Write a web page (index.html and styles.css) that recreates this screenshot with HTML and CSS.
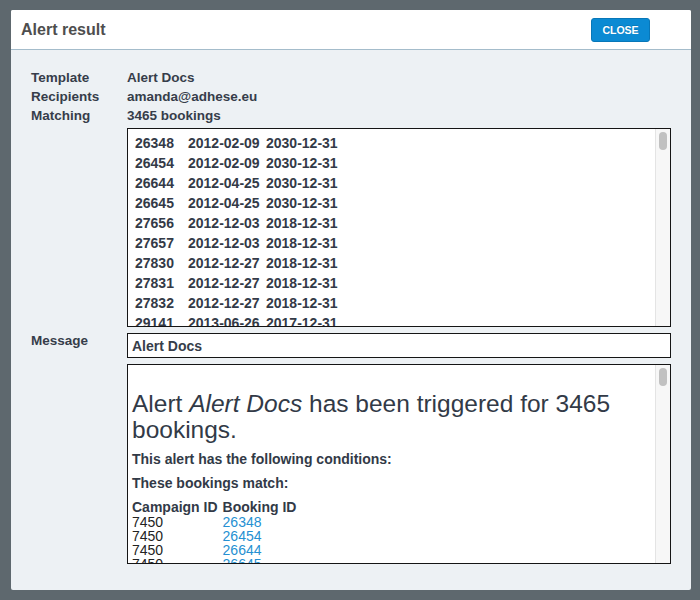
FILE: index.html
```html
<!DOCTYPE html>
<html lang="en">

<head>
  <meta charset="UTF-8">
  <title>Alert result</title>
  <link rel="stylesheet" href="styles.css">
</head>

<body>
  <div class="dialog">
    <div class="dialog-header">
      <h2>Alert result</h2>
      <button class="close-btn">CLOSE</button>
    </div>

    <div class="dialog-body">
      <div class="label">Template</div>
      <div class="value">Alert Docs</div>

      <div class="label">Recipients</div>
      <div class="value">amanda@adhese.eu</div>

      <div class="label">Matching</div>
      <div class="value">3465 bookings</div>

      <div class="label"></div>
      <div class="scroll-box booking-list">
        <div class="scroll-content">
          <table class="bookings">
            <tr><td>26348</td><td>2012-02-09</td><td>2030-12-31</td></tr>
            <tr><td>26454</td><td>2012-02-09</td><td>2030-12-31</td></tr>
            <tr><td>26644</td><td>2012-04-25</td><td>2030-12-31</td></tr>
            <tr><td>26645</td><td>2012-04-25</td><td>2030-12-31</td></tr>
            <tr><td>27656</td><td>2012-12-03</td><td>2018-12-31</td></tr>
            <tr><td>27657</td><td>2012-12-03</td><td>2018-12-31</td></tr>
            <tr><td>27830</td><td>2012-12-27</td><td>2018-12-31</td></tr>
            <tr><td>27831</td><td>2012-12-27</td><td>2018-12-31</td></tr>
            <tr><td>27832</td><td>2012-12-27</td><td>2018-12-31</td></tr>
            <tr><td>29141</td><td>2013-06-26</td><td>2017-12-31</td></tr>
            <tr><td>29142</td><td>2013-06-26</td><td>2017-12-31</td></tr>
          </table>
        </div>
        <div class="scrollbar"><div class="thumb"></div></div>
      </div>

      <div class="label message-label">Message</div>
      <div class="message">
        <input type="text" class="subject-input" value="Alert Docs">

        <div class="scroll-box message-box">
          <div class="scroll-content mail">
            <h1>Alert <em>Alert Docs</em> has been triggered for 3465 bookings.</h1>
            <p>This alert has the following conditions:</p>
            <p>These bookings match:</p>
            <table class="match-table">
              <tr><th>Campaign ID</th><th>Booking ID</th></tr>
              <tr><td>7450</td><td><a href="#">26348</a></td></tr>
              <tr><td>7450</td><td><a href="#">26454</a></td></tr>
              <tr><td>7450</td><td><a href="#">26644</a></td></tr>
              <tr><td>7450</td><td><a href="#">26645</a></td></tr>
              <tr><td>7450</td><td><a href="#">27656</a></td></tr>
            </table>
          </div>
          <div class="scrollbar"><div class="thumb"></div></div>
        </div>
      </div>
    </div>
  </div>
</body>

</html>
```

FILE: styles.css
```css
* {
  margin: 0;
  padding: 0;
  box-sizing: border-box;
  font-family: "Liberation Sans", Arial, sans-serif;
}

body {
  background-color: #5e686e;
  padding: 10px 9px 10px 11px;
}

.dialog {
  width: 680px;
  height: 580px;
  background-color: #edf1f4;
  border-radius: 2px;
  overflow: hidden;
}

.dialog-header {
  height: 40px;
  background-color: white;
  border-bottom: 1px solid #a4bccb;
  display: flex;
  align-items: center;
  justify-content: space-between;
  padding: 0 41px 0 10px;
}

.dialog-header h2 {
  font-size: 16px;
  font-weight: bold;
  color: #4e4e4e;
}

.close-btn {
  width: 59px;
  height: 24px;
  margin-top: 1px;
  background-color: #0b8ad3;
  border: 1px solid #0877b8;
  border-radius: 3px;
  color: white;
  font-size: 10.5px;
  font-weight: bold;
  text-shadow: 0 -1px 0 rgba(0, 0, 0, 0.15);
  cursor: pointer;
}

.dialog-body {
  display: grid;
  grid-template-columns: 96px 544px;
  padding: 18px 20px 0 20px;
  color: #363d4a;
}

.label,
.value {
  font-size: 13.5px;
  font-weight: bold;
  line-height: 19px;
}

.scroll-box {
  display: flex;
  background-color: white;
  border: 1px solid #151515;
}

.scroll-content {
  flex: 1;
  overflow: hidden;
}

.scrollbar {
  width: 15px;
  background-color: #f7f7f7;
  border-left: 1px solid #e4e4e4;
}

.thumb {
  width: 8px;
  height: 18px;
  margin: 3px auto 0;
  background-color: #c1c1c1;
  border-radius: 4px;
}

.booking-list {
  height: 199px;
  margin-top: 3px;
}

.booking-list .scroll-content {
  padding: 4px 7px 0;
}

.bookings {
  border-collapse: collapse;
  font-size: 14px;
  font-weight: bold;
  line-height: 20px;
  color: #333a47;
}

.bookings td {
  padding: 0;
}

.bookings td:nth-child(1) {
  width: 53px;
}

.bookings td:nth-child(2) {
  width: 78px;
}

.message-label {
  margin-top: 6px;
  line-height: 15px;
  padding-top: 0;
}

.subject-input {
  display: block;
  width: 100%;
  height: 25px;
  margin-top: 6px;
  padding: 0 4px;
  border: 1px solid #151515;
  background-color: white;
  font-size: 14px;
  font-weight: bold;
  color: #363d4a;
  outline: none;
}

.message-box {
  height: 200px;
  margin-top: 6px;
}

.mail {
  padding: 0 4px;
  color: #323a47;
}

.mail h1 {
  font-size: 24.5px;
  font-weight: normal;
  line-height: 26px;
  margin: 26px 0 8px;
}

.mail p {
  font-size: 14px;
  font-weight: bold;
  line-height: 16px;
  margin: 8px 0;
}

.match-table {
  border-collapse: collapse;
  font-size: 14px;
}

.match-table th {
  text-align: left;
  line-height: 16px;
  padding: 0 5px 0 0;
}

.match-table td {
  line-height: 14px;
  padding: 0 5px 0 0;
  color: #222;
}

.match-table a {
  color: #2590d2;
  text-decoration: none;
}
```
